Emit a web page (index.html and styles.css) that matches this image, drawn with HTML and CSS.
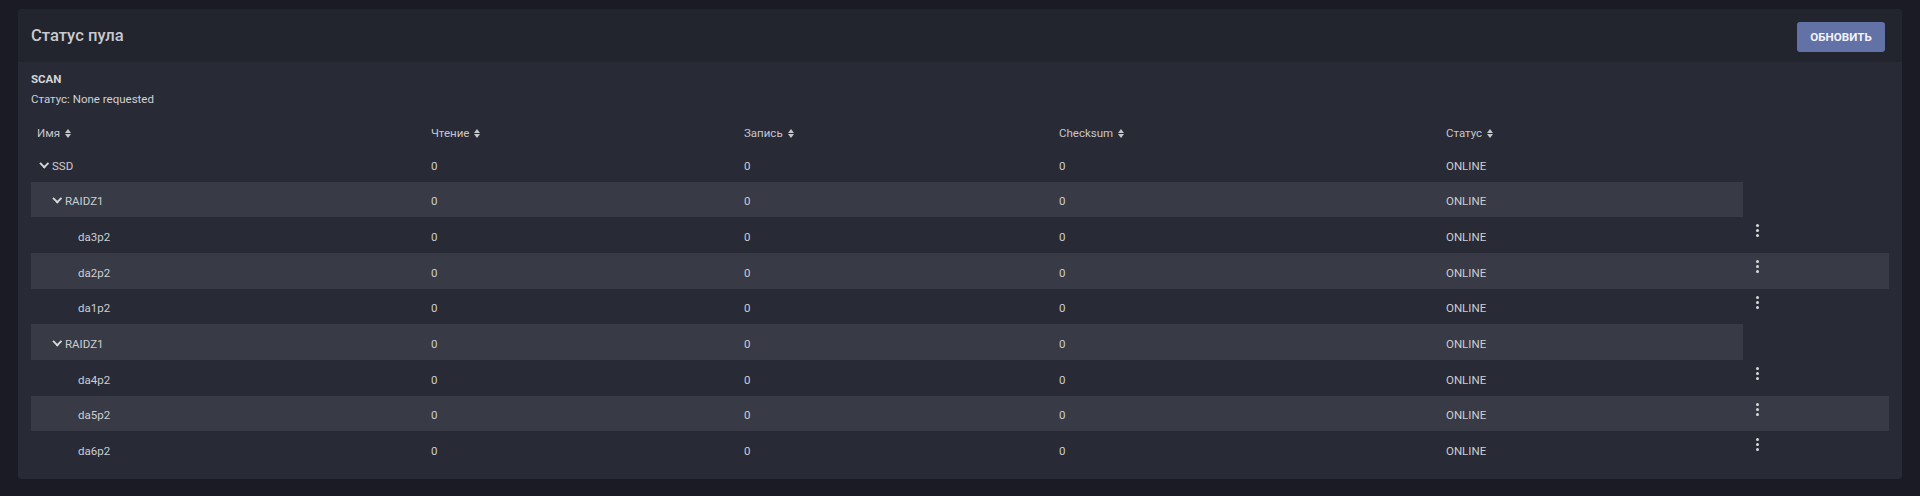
FILE: index.html
```html
<!DOCTYPE html>
<html lang="ru">
<head>
<meta charset="utf-8">
<title>Статус пула</title>
<link rel="stylesheet" href="styles.css">
</head>
<body>
<div class="card">
  <div class="card-header">
    <h1 class="card-title">Статус пула</h1>
    <button class="btn-refresh">ОБНОВИТЬ</button>
  </div>
  <div class="card-body">
    <div class="scan-title">SCAN</div>
    <div class="scan-status">Статус: None requested</div>
    <div class="table">
      <div class="row head">
        <div class="cell name">Имя <span class="sort"></span></div>
        <div class="cell">Чтение <span class="sort"></span></div>
        <div class="cell">Запись <span class="sort"></span></div>
        <div class="cell">Checksum <span class="sort"></span></div>
        <div class="cell">Статус <span class="sort"></span></div>
      </div>

      <div class="row group">
        <div class="cell name lvl0"><span class="chev"></span>SSD</div>
        <div class="cell">0</div><div class="cell">0</div><div class="cell">0</div><div class="cell">ONLINE</div>
      </div>
      <div class="row group shaded">
        <div class="cell name lvl1"><span class="chev"></span>RAIDZ1</div>
        <div class="cell">0</div><div class="cell">0</div><div class="cell">0</div><div class="cell">ONLINE</div>
      </div>
      <div class="row">
        <div class="cell name lvl2">da3p2</div>
        <div class="cell">0</div><div class="cell">0</div><div class="cell">0</div><div class="cell">ONLINE</div>
        <div class="cell act"><span class="kebab"><i></i><i></i><i></i></span></div>
      </div>
      <div class="row shaded">
        <div class="cell name lvl2">da2p2</div>
        <div class="cell">0</div><div class="cell">0</div><div class="cell">0</div><div class="cell">ONLINE</div>
        <div class="cell act"><span class="kebab"><i></i><i></i><i></i></span></div>
      </div>
      <div class="row">
        <div class="cell name lvl2">da1p2</div>
        <div class="cell">0</div><div class="cell">0</div><div class="cell">0</div><div class="cell">ONLINE</div>
        <div class="cell act"><span class="kebab"><i></i><i></i><i></i></span></div>
      </div>
      <div class="row group shaded">
        <div class="cell name lvl1"><span class="chev"></span>RAIDZ1</div>
        <div class="cell">0</div><div class="cell">0</div><div class="cell">0</div><div class="cell">ONLINE</div>
      </div>
      <div class="row">
        <div class="cell name lvl2">da4p2</div>
        <div class="cell">0</div><div class="cell">0</div><div class="cell">0</div><div class="cell">ONLINE</div>
        <div class="cell act"><span class="kebab"><i></i><i></i><i></i></span></div>
      </div>
      <div class="row shaded">
        <div class="cell name lvl2">da5p2</div>
        <div class="cell">0</div><div class="cell">0</div><div class="cell">0</div><div class="cell">ONLINE</div>
        <div class="cell act"><span class="kebab"><i></i><i></i><i></i></span></div>
      </div>
      <div class="row">
        <div class="cell name lvl2">da6p2</div>
        <div class="cell">0</div><div class="cell">0</div><div class="cell">0</div><div class="cell">ONLINE</div>
        <div class="cell act"><span class="kebab"><i></i><i></i><i></i></span></div>
      </div>
    </div>
  </div>
</div>
</body>
</html>
```

FILE: styles.css
```css
html, body {
  margin: 0;
  padding: 0;
}
body {
  background: #1a1b25;
  font-family: Roboto, "Noto Sans", "Liberation Sans", sans-serif;
  color: #cfd0d4;
  width: 1920px;
  height: 496px;
  overflow: hidden;
}
.card {
  margin: 9px 0 0 18px;
  width: 1884px;
  height: 470px;
  background: #282a36;
  border-radius: 4px;
  overflow: hidden;
}
.card-header {
  height: 53px;
  background: #22242e;
  display: flex;
  align-items: center;
  justify-content: space-between;
  padding: 0 17px 0 13px;
  box-sizing: border-box;
}
.card-title {
  margin: 0;
  font-size: 16.6px;
  font-weight: 500;
  color: #c9cacf;
  letter-spacing: 0;
}
.btn-refresh {
  width: 88px;
  height: 30px;
  background: #6272a6;
  border: none;
  border-radius: 3px;
  color: #f2f3f7;
  font-family: Roboto, "Liberation Sans", sans-serif;
  font-size: 11.6px;
  font-weight: 700;
  padding: 0;
  margin-top: 2px;
}
.card-body {
  padding: 9px 13px 0 13px;
}
.scan-title {
  font-size: 11.5px;
  font-weight: 700;
  line-height: 16px;
  color: #d4d5d9;
}
.scan-status {
  font-size: 11.5px;
  line-height: 16px;
  margin-top: 4px;
  color: #d0d1d5;
}
.table {
  margin-top: 13px;
  width: 1858px;
}
.row {
  display: grid;
  grid-template-columns: 394px 313px 315px 387px 303px 146px;
  height: 35.66px;
  align-items: center;
  font-size: 11.5px;
  color: #cdced2;
}
.row.group {
  width: 1712px;
  grid-template-columns: 394px 313px 315px 387px 303px;
}
.row.head {
  height: 26px;
  color: #c6c7cc;
  font-size: 11.5px;
}
.row.shaded {
  background: #383a45;
}
.cell {
  padding-left: 6px;
  padding-top: 4px;
  white-space: nowrap;
  display: flex;
  align-items: center;
}
.row.head .cell {
  padding-top: 0;
}
.cell.name.lvl0 { padding-left: 9px; }
.cell.name.lvl1 { padding-left: 22px; }
.cell.name.lvl2 { padding-left: 47px; }
.chev {
  display: inline-block;
  width: 8px;
  height: 8px;
  margin-right: 4px;
  position: relative;
  top: -1px;
}
.chev::before {
  content: "";
  position: absolute;
  left: 1px;
  top: -1px;
  width: 4.5px;
  height: 4.5px;
  border-right: 2px solid #d6d7db;
  border-bottom: 2px solid #d6d7db;
  transform: rotate(45deg);
}
.sort {
  display: inline-flex;
  flex-direction: column;
  margin-left: 5px;
  gap: 1px;
}
.sort::before,
.sort::after {
  content: "";
  width: 0;
  height: 0;
  border-left: 3.5px solid transparent;
  border-right: 3.5px solid transparent;
}
.sort::before {
  border-bottom: 4px solid #c6c7cc;
}
.sort::after {
  border-top: 4px solid #c6c7cc;
}
.cell.act {
  padding-left: 13px;
  align-self: start;
  padding-top: 7px;
}
.kebab {
  display: inline-flex;
  flex-direction: column;
  gap: 2px;
}
.kebab i {
  display: block;
  width: 3px;
  height: 3px;
  border-radius: 50%;
  background: #d8d9dc;
}
```
